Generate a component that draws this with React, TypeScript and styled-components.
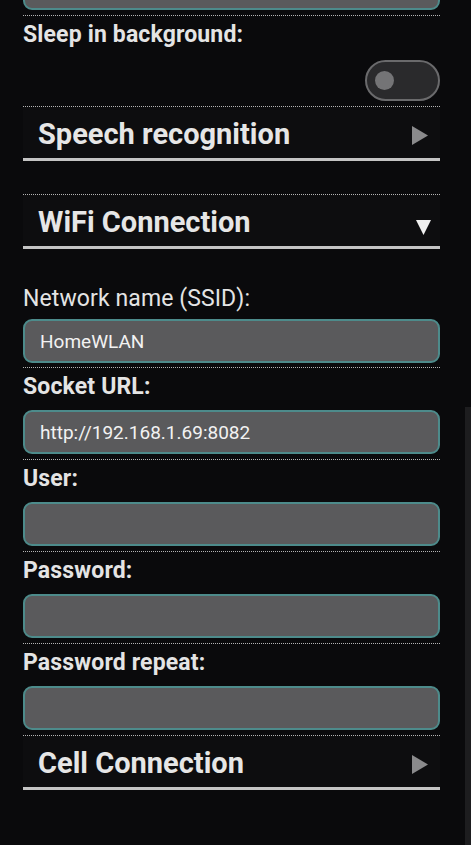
import React from 'react';
import styled, { createGlobalStyle } from 'styled-components';

const GlobalStyle = createGlobalStyle`
  html, body {
    margin: 0;
    padding: 0;
    background: #0a0a0c;
    overflow: hidden;
  }
  body {
    font-family: Roboto, "Noto Sans", "Liberation Sans", sans-serif;
  }
`;

const Screen = styled.div`
  position: relative;
  width: 471px;
  height: 845px;
  overflow: hidden;
  background: #0a0a0c;
`;

const Column = styled.div`
  display: flex;
  flex-direction: column;
  width: 417px;
  margin-left: 23px;
`;

const Dotted = styled.div`
  height: 0;
  border-top: 1px dotted #b4b4b4;
`;

const Label = styled.div<{ $regular?: boolean; $top?: number }>`
  padding-top: ${({ $top }) => ($top ?? 7)}px;
  font-size: 23px;
  line-height: 24px;
  font-weight: ${({ $regular }) => ($regular ? 400 : 700)};
  color: #e4e4e4;
  letter-spacing: ${({ $regular }) => ($regular ? '0.1px' : '0.15px')};
`;

const TextBox = styled.input<{ $mt?: number; $mb?: number }>`
  display: block;
  box-sizing: border-box;
  width: 100%;
  height: 44px;
  margin: ${({ $mt }) => $mt ?? 11}px 0 ${({ $mb }) => $mb ?? 5}px;
  padding: 0 15px;
  border: 2px solid #4d8b8b;
  border-radius: 9px;
  background: #5a5a5c;
  color: #f2f2f2;
  font-family: Roboto, "Noto Sans", sans-serif;
  font-size: 19px;
  outline: none;
`;

const ToggleRow = styled.div`
  display: flex;
  justify-content: flex-end;
  margin: 13px 0 5px;
`;

const Toggle = styled.div`
  box-sizing: border-box;
  display: flex;
  align-items: center;
  width: 75px;
  height: 41px;
  padding-left: 8px;
  border: 2px solid #6a6a6c;
  border-radius: 21px;
  background: #2a2a2c;
`;

const Knob = styled.div`
  width: 19px;
  height: 19px;
  border-radius: 50%;
  background: #747476;
`;

const SectionHeader = styled.div<{ $pr: number }>`
  display: flex;
  align-items: center;
  justify-content: space-between;
  box-sizing: border-box;
  height: 51px;
  padding: 3px ${({ $pr }) => $pr}px 0 15px;
  background: #0d0d0f;
  font-size: 29px;
  font-weight: 700;
  color: #e6e6e6;
`;

const Underline = styled.div<{ $mb?: number }>`
  height: 3px;
  background: #c4c4c4;
  margin-bottom: ${({ $mb }) => $mb ?? 0}px;
`;

const Arrow = styled.svg<{ $dy: number }>`
  display: block;
  margin-top: ${({ $dy }) => $dy}px;
`;

const ScrollThumb = styled.div`
  position: absolute;
  right: 0;
  top: 407px;
  width: 6px;
  bottom: 0;
  background: #1d1d1f;
`;

function RightArrow() {
  return (
    <Arrow $dy={2} width="16" height="19" viewBox="0 0 16 19">
      <polygon points="0,0 16,9.5 0,19" fill="#8a8a8c" />
    </Arrow>
  );
}

function DownArrow() {
  return (
    <Arrow $dy={10} width="15" height="15" viewBox="0 0 15 15">
      <polygon points="0,0 15,0 7.5,15" fill="#f0f0f0" />
    </Arrow>
  );
}

function Section({ title, open }: { title: string; open?: boolean }) {
  return (
    <SectionHeader $pr={open ? 9 : 12}>
      <span>{title}</span>
      {open ? <DownArrow /> : <RightArrow />}
    </SectionHeader>
  );
}

function Field({ label, value, regular }: { label: string; value?: string; regular?: boolean }) {
  return (
    <>
      <Label $regular={regular}>{label}</Label>
      <TextBox readOnly defaultValue={value ?? ''} />
      <Dotted />
    </>
  );
}

export default function App() {
  return (
    <Screen>
      <GlobalStyle />
      <Column>
        <TextBox readOnly defaultValue="" $mt={-34} $mb={5} />
        <Dotted />
        <Label>Sleep in background:</Label>
        <ToggleRow>
          <Toggle>
            <Knob />
          </Toggle>
        </ToggleRow>
        <Dotted />
        <Section title="Speech recognition" />
        <Underline $mb={33} />
        <Dotted />
        <Section title="WiFi Connection" open />
        <Underline />
        <Label $regular $top={38}>Network name (SSID):</Label>
        <TextBox readOnly defaultValue="HomeWLAN" $mt={8} $mb={4} />
        <Dotted />
        <Field label="Socket URL:" value="http://192.168.1.69:8082" />
        <Field label="User:" />
        <Field label="Password:" />
        <Field label="Password repeat:" />
        <Section title="Cell Connection" />
        <Underline />
      </Column>
      <ScrollThumb />
    </Screen>
  );
}
